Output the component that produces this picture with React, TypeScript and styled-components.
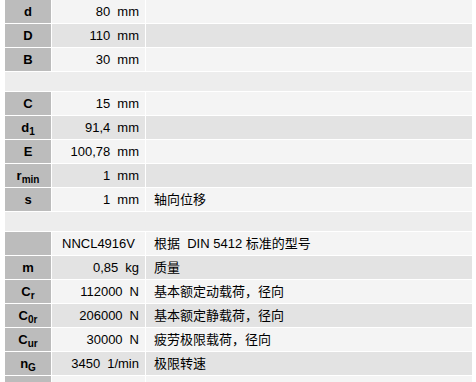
import React from 'react';
import styled, { createGlobalStyle } from 'styled-components';

type Row =
  | { kind: 'spacer' }
  | {
      kind: 'data';
      label?: React.ReactNode;
      value: string;
      unit?: string;
      centered?: boolean;
      desc?: string;
    };

const rows: Row[] = [
  { kind: 'data', label: 'd', value: '80', unit: 'mm' },
  { kind: 'data', label: 'D', value: '110', unit: 'mm' },
  { kind: 'data', label: 'B', value: '30', unit: 'mm' },
  { kind: 'spacer' },
  { kind: 'data', label: 'C', value: '15', unit: 'mm' },
  { kind: 'data', label: <>d<sub>1</sub></>, value: '91,4', unit: 'mm' },
  { kind: 'data', label: 'E', value: '100,78', unit: 'mm' },
  { kind: 'data', label: <>r<sub>min</sub></>, value: '1', unit: 'mm' },
  { kind: 'data', label: 's', value: '1', unit: 'mm', desc: '轴向位移' },
  { kind: 'spacer' },
  { kind: 'data', value: 'NNCL4916V', centered: true, desc: '根据  DIN 5412 标准的型号' },
  { kind: 'data', label: 'm', value: '0,85', unit: 'kg', desc: '质量' },
  { kind: 'data', label: <>C<sub>r</sub></>, value: '112000', unit: 'N', desc: '基本额定动载荷，径向' },
  { kind: 'data', label: <>C<sub>0r</sub></>, value: '206000', unit: 'N', desc: '基本额定静载荷，径向' },
  { kind: 'data', label: <>C<sub>ur</sub></>, value: '30000', unit: 'N', desc: '疲劳极限载荷，径向' },
  { kind: 'data', label: <>n<sub>G</sub></>, value: '3450', unit: '1/min', desc: '极限转速' },
  { kind: 'data', value: '' },
];

const App = () => {
  let stripe = 0;
  return (
    <>
      <GlobalStyle />
      <Page>
        <Table>
          <colgroup>
            <col style={{ width: 46 }} />
            <col style={{ width: 93 }} />
            <col />
          </colgroup>
          <tbody>
            {rows.map((row, i) => {
              if (row.kind === 'spacer') {
                stripe = 0;
                return (
                  <SpacerRow key={i}>
                    <td colSpan={3} />
                  </SpacerRow>
                );
              }
              const dark = stripe % 2 === 1;
              stripe++;
              return (
                <DataRow key={i} dark={dark}>
                  <Label>{row.label}</Label>
                  <Value centered={row.centered}>
                    {row.value}
                    {row.unit && <Unit>{row.unit}</Unit>}
                  </Value>
                  <Desc>{row.desc}</Desc>
                </DataRow>
              );
            })}
          </tbody>
        </Table>
      </Page>
    </>
  );
};

export default App;

const GlobalStyle = createGlobalStyle`
  html, body {
    margin: 0;
    padding: 0;
    background: #ffffff;
  }
  body {
    font-family: "Liberation Sans", Arial, "Noto Sans CJK SC", sans-serif;
    font-size: 13px;
    color: #000;
  }
`;

const Page = styled.div`
  width: 476px;
  height: 382px;
  overflow: hidden;
  padding-left: 4px;
  box-sizing: border-box;
`;

const Table = styled.table`
  width: 469px;
  border-collapse: separate;
  border-spacing: 1px;
  margin-top: -1px;
  table-layout: fixed;

  td {
    padding: 0;
    height: 23px;
    line-height: 15px;
    vertical-align: middle;
  }
`;

const DataRow = styled.tr<{ dark: boolean }>`
  td {
    background: ${({ dark }) => (dark ? '#e3e3e3' : '#f4f4f4')};
  }
`;

const SpacerRow = styled.tr`
  td {
    height: 19px;
    background: #ededed;
  }
`;

const Label = styled.td`
  && {
    background: #bcbcbc;
  }
  text-align: center;
  font-weight: bold;

  sub {
    font-size: 10px;
    line-height: 0;
    vertical-align: -3px;
  }
`;

const Value = styled.td<{ centered?: boolean }>`
  text-align: ${({ centered }) => (centered ? 'center' : 'right')};
  padding-right: ${({ centered }) => (centered ? '0' : '6px')} !important;
  white-space: nowrap;
`;

const Unit = styled.span`
  margin-left: 7px;
`;

const Desc = styled.td`
  padding-left: 8px !important;
  white-space: pre;
`;
